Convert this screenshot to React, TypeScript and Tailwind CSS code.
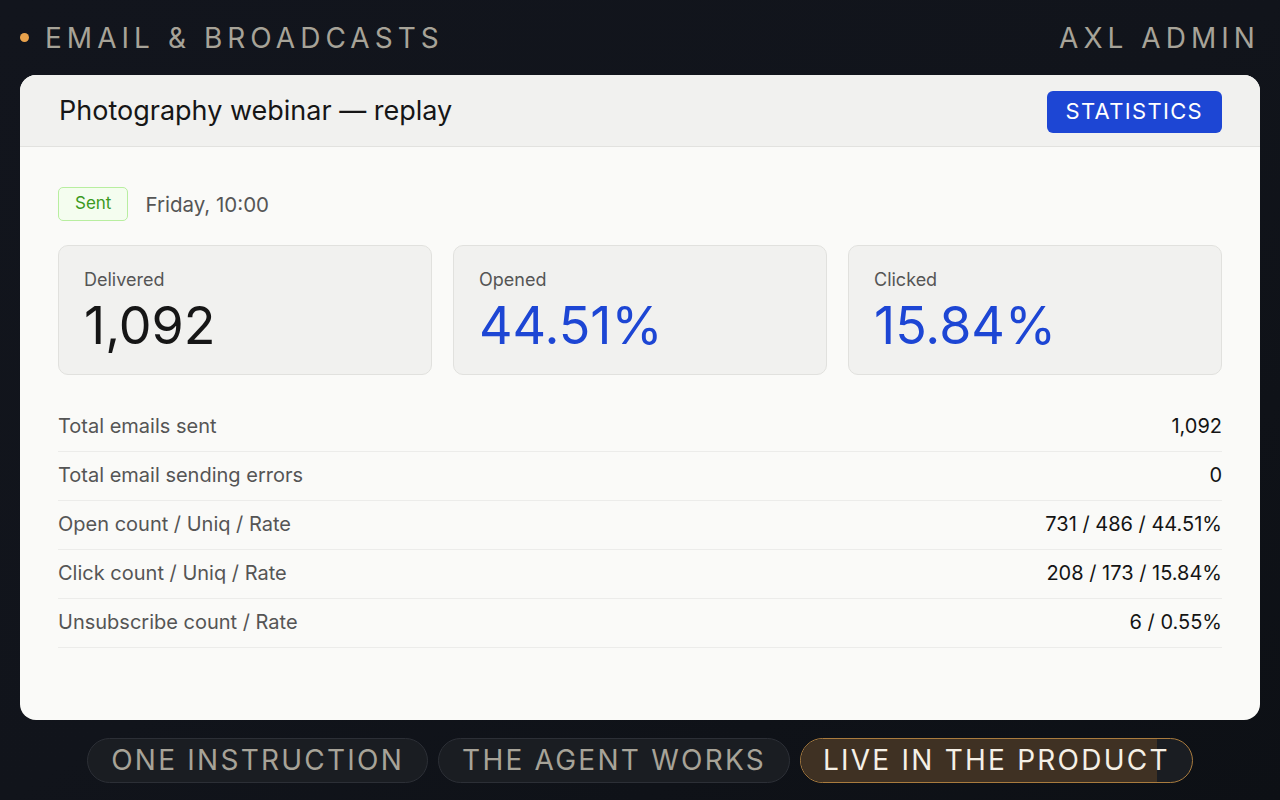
import React from 'react'

const stats = [
  { label: 'Delivered', value: '1,092', accent: false },
  { label: 'Opened', value: '44.51%', accent: true },
  { label: 'Clicked', value: '15.84%', accent: true },
]

const rows = [
  { label: 'Total emails sent', value: '1,092' },
  { label: 'Total email sending errors', value: '0' },
  { label: 'Open count / Uniq / Rate', value: '731 / 486 / 44.51%' },
  { label: 'Click count / Uniq / Rate', value: '208 / 173 / 15.84%' },
  { label: 'Unsubscribe count / Rate', value: '6 / 0.55%' },
]

export default function App() {
  return (
    <div
      className="w-[1280px] h-[800px] overflow-hidden flex flex-col bg-gradient-to-br from-[#12151d] via-[#11141b] to-[#0d1015]"
      style={{ fontFamily: 'Inter, "Noto Sans", sans-serif' }}
    >
      {/* Top bar */}
      <div className="h-[75px] flex items-center justify-between pl-[20px] pr-[20px]">
        <div className="flex items-center gap-[16px]">
          <span className="w-[9px] h-[9px] rounded-full bg-[#e9a24c]" />
          <span className="text-[28px] tracking-[0.18em] text-[#a7a398] uppercase">Email &amp; Broadcasts</span>
        </div>
        <span className="text-[28px] tracking-[0.18em] text-[#a7a398] uppercase">AXL Admin</span>
      </div>

      {/* Card */}
      <div className="mx-[20px] h-[645px] rounded-[16px] bg-[#fafaf8] overflow-hidden flex flex-col">
        <div className="h-[72px] shrink-0 flex items-center justify-between pl-[39px] pr-[38px] pt-[2px] bg-[#f1f1ef] border-b border-[#e2e2df]">
          <h1 className="text-[27px] text-[#161616]">Photography webinar — replay</h1>
          <button className="h-[42px] px-[19px] rounded-[6px] bg-[#1d46d4] text-white text-[22px] tracking-[0.06em] uppercase">
            Statistics
          </button>
        </div>

        <div className="flex-1 pl-[38px] pr-[38px] pt-[40px]">
          <div className="flex items-center gap-[17px]">
            <span className="h-[34px] px-[16px] flex items-center rounded-[5px] border border-[#b8eea0] bg-[#f4fdef] text-[#3b9a1e] text-[17px]">
              Sent
            </span>
            <span className="text-[20.5px] text-[#555] pt-[2px]">Friday, 10:00</span>
          </div>

          <div className="grid grid-cols-3 gap-[21px] mt-[24px]">
            {stats.map(s => (
              <div key={s.label} className="h-[130px] rounded-[10px] border border-[#e1e1de] bg-[#f1f1ef] pl-[25px] pt-[22px]">
                <p className="text-[18px] text-[#555] leading-[24px]">{s.label}</p>
                <p className={`text-[52px] leading-[60px] mt-[4px] ${s.accent ? 'text-[#1d46d4]' : 'text-[#161616]'}`}>
                  {s.value}
                </p>
              </div>
            ))}
          </div>

          <div className="mt-[28px]">
            {rows.map(r => (
              <div key={r.label} className="h-[49px] flex items-center justify-between border-b border-[#ececea] pb-[2px]">
                <span className="text-[20px] text-[#555]">{r.label}</span>
                <span className="text-[20px] text-[#141414]">{r.value}</span>
              </div>
            ))}
          </div>
        </div>
      </div>

      {/* Steps */}
      <div className="flex-1 flex items-center justify-center gap-[10px]">
        <div className="h-[45px] px-[23px] flex items-center rounded-full border border-[#2c2f36] bg-[#1a1d22] text-[28px] tracking-[0.08em] text-[#a7a398] uppercase">
          One instruction
        </div>
        <div className="h-[45px] px-[23px] flex items-center rounded-full border border-[#2c2f36] bg-[#1a1d22] text-[28px] tracking-[0.08em] text-[#a7a398] uppercase">
          The agent works
        </div>
        <div className="relative h-[45px] rounded-full border border-[#a97b3e] bg-[#1a1d22] overflow-hidden">
          <div className="absolute inset-y-0 left-0 w-[91%] bg-[#3f3123]" />
          <span className="relative h-full px-[22px] flex items-center text-[28px] tracking-[0.08em] text-[#f5f0e6] uppercase">
            Live in the product
          </span>
        </div>
      </div>
    </div>
  )
}
